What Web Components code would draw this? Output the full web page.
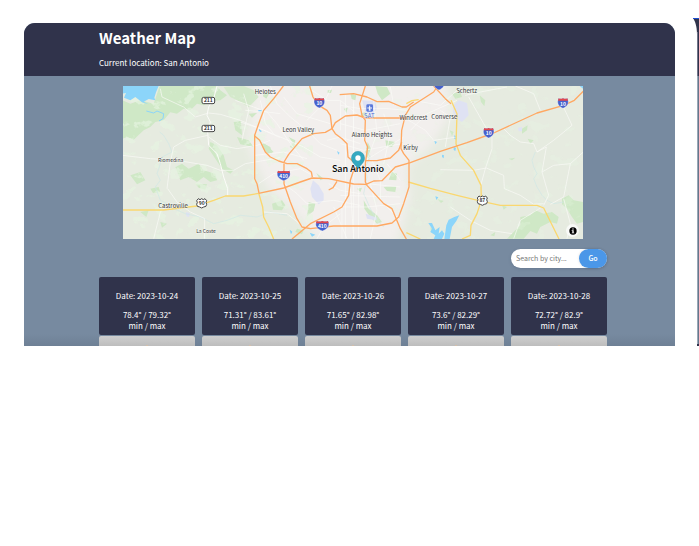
<!DOCTYPE html>
<html lang="en">
<head>
<meta charset="utf-8">
<meta name="viewport" content="width=device-width, initial-scale=1">
<title>Weather Map</title>
<style>
  html { background: #fff; }
  body { margin: 0; font-family: "Noto Sans CJK SC", "Open Sans", sans-serif; font-size: 8px; line-height: 11px; color: #fff; }
</style>
</head>
<body>
<weather-stage>
  <weather-app>
    <weather-header slot="header">
      <span slot="title">Weather Map</span>
      <span slot="place">Current location: San Antonio</span>
    </weather-header>
    <city-map></city-map>
    <city-search></city-search>
    <forecast-row>
      <day-card date="2023-10-24">78.4° / 79.32°</day-card>
      <day-card date="2023-10-25">71.31° / 83.61°</day-card>
      <day-card date="2023-10-26">71.65° / 82.98°</day-card>
      <day-card date="2023-10-27">73.6° / 82.29°</day-card>
      <day-card date="2023-10-28">72.72° / 82.9°</day-card>
    </forecast-row>
  </weather-app>
  <next-slide slot="next"></next-slide>
</weather-stage>

<template id="weather-stage">
  <style>
    :host { display: grid; grid-template-columns: minmax(0, 1fr) 6px; column-gap: 18px; padding: 18px 0 0 24px; }
    .main { padding-top: 5px; }
  </style>
  <div class="main"><slot></slot></div>
  <slot name="next"></slot>
</template>

<template id="next-slide">
  <style>
    :host { display: block; }
    svg { display: block; width: 6px; height: 100%; }
  </style>
  <svg viewBox="0 0 6 328" preserveAspectRatio="none" aria-hidden="true">
    <path d="M0 0H6V58H4V16C4 8 2 3 0 0Z" fill="#30334b"/>
    <path d="M0 0H6V1H0Z" fill="#1d4ed0"/>
    <path d="M4 14H5V58H4Z" fill="#73758a"/>
    <path d="M4 58H6V328H4Z" fill="#66778c"/>
    <path d="M4 58H5V328H4Z" fill="#9aa8b7"/>
    <path d="M4 326H6V328H4Z" fill="#30334b"/>
  </svg>
</template>

<template id="weather-app">
  <style>
    :host { display: block; overflow: hidden; border-radius: 11px 11px 0 0; background: linear-gradient(to top, #6e8095, #778aa0 12px); }
    main { display: flex; flex-direction: column; padding: 10px 68px 0 75px; }
  </style>
  <slot name="header"></slot>
  <main><slot></slot></main>
</template>

<template id="weather-header">
  <style>
    :host { display: block; background: #30334b; padding: 3px 68px 7px 75px; }
    h1 { margin: 0 0 7px; font-size: 15px; line-height: 24px; font-weight: 700; }
    p { margin: 0; line-height: 12px; }
  </style>
  <header><h1><slot name="title"></slot></h1><p><slot name="place"></slot></p></header>
</template>

<template id="city-search">
  <style>
    :host { display: flex; justify-content: flex-end; margin: 10px 0 9px; }
    form { display: flex; width: 96px; height: 19px; border-radius: 10px; background: #fff; box-shadow: 0 1px 3px #4d607766; }
    input { flex: 1; min-width: 0; border: 0; outline: 0; background: none; padding: 0 0 0 5px; font: 7px/19px "Noto Sans CJK SC", sans-serif; color: #333; }
    input::placeholder { color: #777; opacity: 1; }
    button { width: 28px; border: 0; padding: 0; border-radius: 10px; background: #4b97e8; color: #fff; font: 500 7px/19px "Noto Sans CJK SC", sans-serif; box-shadow: 0 0 3px #0002; }
  </style>
  <form role="search">
    <input type="text" aria-label="Search by city" placeholder="Search by city...">
    <button type="button">Go</button>
  </form>
</template>

<template id="forecast-row">
  <style>:host { display: grid; grid-template-columns: repeat(5, minmax(0, 1fr)); column-gap: 7px; }</style>
  <slot></slot>
</template>

<template id="day-card">
  <style>
    :host { display: block; text-align: center; }
    header { background: #30334b; border-radius: 2px; padding: 13px 0 4px; }
    p { margin: 0; }
    .date { margin-bottom: 8px; }
    .sky { display: flex; justify-content: center; align-items: flex-end; margin-top: 1px; height: 10px; border-radius: 2px 2px 0 0; background: linear-gradient(#cecece, #bdbdbd); }
    .sky svg { display: block; width: 6px; height: 1px; }
  </style>
  <header>
    <p class="date">Date: <span></span></p>
    <p><slot></slot></p>
    <p>min / max</p>
  </header>
  <div class="sky"><svg viewBox="0 0 6 1" aria-hidden="true"><path d="M2 1L3 0L4 1Z" fill="#e9bd93"/></svg></div>
</template>

<template id="city-map">
  <style>
    :host { display: block; position: relative; margin: 0 24px; height: 153px; overflow: hidden; background: #e6ebe0; }
    .map { display: block; width: 100%; height: 100%; }
    text { font-family: "Noto Sans CJK SC", sans-serif; font-size: 18px; fill: #333; stroke: #fff; stroke-width: 3px; paint-order: stroke; stroke-opacity: .5; text-anchor: middle; }
    .small { font-size: 15px; }
    .big { font-size: 27px; font-weight: 500; fill: #000; }
    .num { font-size: 15px; font-weight: 700; stroke: none; }
    .white { fill: #fff; }
    .sat { fill: #4a6ad4; }
    button { position: absolute; right: 4px; bottom: 2px; width: 13px; height: 13px; padding: 0; border: 0; border-radius: 50%; background: #ffffffb0; display: grid; place-items: center; }
    button svg { display: block; width: 8px; height: 8px; }
  </style>
  <svg class="map" viewBox="367 257 1382 459" preserveAspectRatio="xMidYMid slice" role="img" aria-label="Map of San Antonio and surroundings">
    <defs>
      <filter id="soft" x="-20%" y="-20%" width="140%" height="140%"><feGaussianBlur stdDeviation="14"/></filter>
      <filter id="wild" x="0" y="0" width="100%" height="100%">
        <feTurbulence type="fractalNoise" baseFrequency=".022 .028" numOctaves="4" seed="8"/>
        <feColorMatrix values="0 0 0 0 .80  0 0 0 0 .91  0 0 0 0 .76  12 0 0 0 -7.1"/>
      </filter>
      <g id="interstate">
        <path d="M-13-14Q-7-11 0-14Q7-11 13-14C20 0 14 10 0 16C-14 10-20 0-13-14Z" fill="#4561cd" stroke="#fff" stroke-width="1"/>
        <path d="M-13-14Q-7-11 0-14Q7-11 13-14L15-7H-15Z" fill="#e2484d"/>
      </g>
      <g id="interstate-wide">
        <path d="M-17-14Q-9-11 0-14Q9-11 17-14C24 0 16 10 0 16C-16 10-24 0-17-14Z" fill="#4561cd" stroke="#fff" stroke-width="1"/>
        <path d="M-17-14Q-9-11 0-14Q9-11 17-14L19-7H-19Z" fill="#e2484d"/>
      </g>
      <path id="us" d="M-10-14L-5-11L0-14L5-11L10-14L15-8Q11-3 15 3Q15 11 6 11L0 14L-6 11Q-15 11-15 3Q-11-3-15-8Z" fill="#fff" stroke="#444" stroke-width="3"/>
    </defs>
    <rect x="367" y="257" width="1382" height="459" fill="#e6ebe0"/>
    <path d="M770 230H1330L1360 330L1290 440L1220 500L1230 590L1190 730H960L890 640L800 560L740 430Z" fill="#f2efed" filter="url(#soft)"/>

    <g fill="#cfe8c6">
      <g transform="translate(360 240)">
        <path d="M7 60L30 70L60 60L100 70L118 17H290L300 30L320 45L300 60L270 62L250 75L230 70L210 90L190 85L170 100L150 96L130 120L105 125L90 140L70 150L40 178L20 170L7 175Z"/>
        <path d="M310 20L370 17L400 30L415 50L385 80L350 60L330 50Z" opacity=".8"/>
        <path d="M165 260L185 250L205 265L235 250L250 270L285 280L290 300L270 305L250 290L230 305L205 290L180 300Z"/>
        <path d="M270 185L290 195L310 225L320 260L340 270L330 280L305 265L285 235L265 205Z"/>
        <path d="M340 125L362 122L365 165L345 150ZM350 170L385 180L400 200L360 192ZM30 285L60 275L75 300L50 312ZM60 395L85 390L78 410ZM225 310L260 312L255 328L235 322ZM90 325L115 320L120 335L98 338ZM120 425L140 430L125 442ZM430 190L450 200L455 220L440 212ZM385 100L410 98L395 112Z"/>
      </g>
      <g transform="translate(720 240)">
        <path d="M62 185L80 195L100 215L85 222L68 205ZM145 170L165 180L162 205L148 200L158 188ZM95 370L125 360L135 375L125 390L98 388ZM205 365L225 370L220 392L200 408L203 385ZM70 35L88 38L78 55L68 48ZM262 30L275 28L272 38L262 38ZM228 278L250 295L240 300ZM170 445L190 450L185 462L165 455ZM310 85L322 82L318 98ZM330 40L348 44L345 60L334 56Z"/>
      </g>
      <g transform="translate(1020 240)">
        <path d="M105 17L140 20L150 40L125 60L112 40ZM60 100L75 95L85 110L68 112ZM135 180L165 185L155 200L138 198ZM155 275L170 280L168 300L145 298ZM130 320L168 318L165 335L140 332ZM70 360L85 385L110 405L125 425L110 430L90 410L72 385ZM82 185L92 205L85 240L75 215ZM50 325L65 322L60 335ZM290 355L310 362L302 368ZM270 440L280 448L272 456ZM328 150L340 155L335 168Z"/>
      </g>
      <g transform="translate(1320 240)">
        <path d="M240 410L270 405L285 390L310 400L335 395L355 410L350 430L330 425L300 440L290 460L270 452L250 475H200L220 455L240 435ZM365 355L385 345L400 360L429 365V425L410 430L395 410L380 385L365 372ZM245 145L262 135L260 150L245 160ZM205 235L225 232L215 240ZM118 45L135 60L132 78L122 65ZM185 375L200 380L190 388ZM150 465L165 455L162 468ZM35 40L60 35L65 50L45 55ZM262 175L280 180L270 190Z"/>
      </g>
    </g>
    <rect x="367" y="257" width="570" height="459" filter="url(#wild)" opacity=".65"/>
    <rect x="1120" y="257" width="629" height="459" filter="url(#wild)" opacity=".25"/>

    <g fill="#dfe2f3">
      <path d="M938 540L955 555L970 580L970 600L955 612L935 590L930 565Z"/>
      <path d="M1360 315L1375 300L1400 308L1405 345L1385 365L1368 355L1358 335Z"/>
      <path d="M1085 300L1125 302L1130 325L1115 345L1095 335Z"/>
      <path d="M1553 382L1565 380L1565 392L1555 393ZM1096 640L1130 652L1128 660L1100 655ZM557 635L569 638L566 650L558 648Z"/>
    </g>

    <g fill="#8cd5fa">
      <path d="M367 257H475L467 276L462 292L465 300L445 296L430 304L445 312L425 306L405 290L390 300L371 292L377 278L367 280Z"/>
      <path d="M1284 668L1295 668L1305 690L1318 680L1315 700L1325 690L1332 700L1325 716H1300L1305 705L1290 695L1295 685Z"/>
      <path d="M1332 716L1338 675L1345 658L1362 650L1377 645L1368 662L1355 680L1348 716Z"/>
      <path d="M773 330L785 328L784 334L775 334ZM776 385L784 392L782 396L776 391ZM928 697L945 703L935 709ZM1305 588L1314 591L1308 599ZM1302 421L1310 425L1305 432ZM1325 463L1331 465L1330 474L1325 470ZM1362 405L1368 408L1366 418L1361 414ZM1360 440L1367 442L1365 452L1360 449ZM1738 257H1749V266ZM868 688L876 694L872 702ZM1010 452L1018 457L1014 463Z"/>
      <path d="M438 332L460 338L470 332L490 340L488 355L476 362" fill="none" stroke="#8cd5fa" stroke-width="3"/>
    </g>
    <g fill="none" stroke="#cfe7e5" stroke-width="2">
      <path d="M478 395L490 405L505 430L515 455L485 470L480 490L470 520L480 540L465 560L480 600L500 610L520 625L555 640L600 650L640 670L680 660L720 645L770 650L810 635L860 645"/>
      <path d="M1605 455L1595 480L1600 500L1610 520L1600 535L1610 560L1625 585L1640 600L1660 610L1690 605"/>
      <path d="M1098 440L1110 470L1095 500L1100 530L1090 580L1110 625L1130 660L1150 680"/>
    </g>

    <g fill="none" stroke="#fbfbf8" stroke-width="2">
      <g transform="translate(360 240)">
        <path d="M290 17L280 55L265 80L260 105L270 125L262 155L265 195L290 220L300 250L310 290L322 325V345" stroke-width="3"/>
        <path d="M120 25L125 50L190 80L225 110L265 98L300 102L360 120L430 150L480 172M7 225L90 235L170 240L260 255L300 270H340L375 250L480 232M140 325L150 245L160 200L195 180L262 165M265 170L300 195L350 205L410 195L450 180M142 325L170 365L210 395L253 415V475M100 475L120 395L140 375"/>
        <path d="M345 60L400 80L440 95L480 100M370 40L385 90L365 180M420 60L435 130L460 160"/>
      </g>
      <g transform="translate(720 240)">
        <path d="M0 125L60 145L120 170L190 200L240 230L300 240M15 90L80 95L110 130L150 190L190 240M90 17L110 70L150 110L200 150L240 190L290 210M130 50L170 100L270 130M45 225L130 215L200 235M55 310L100 280L180 265L225 290M130 310L170 340L200 370L280 360L360 375M70 395L140 400L190 440M230 475L250 440L300 400M215 30L260 60L300 60L360 110M275 17L250 70L200 120M260 180L300 170L360 190M265 310L300 330L360 340M280 380L320 475M300 60V150M340 70V475M320 220L360 230M305 370V475"/>
      </g>
      <g transform="translate(1020 240)">
        <path d="M15 40V475M40 60V240M0 75L60 85L140 85L200 90M0 130L75 150L180 130M100 60L110 160L80 240M130 100L150 160L130 250M0 190L70 210L185 190M0 380L80 380L180 370M0 345L180 350M55 320V475M95 240L120 300V360M140 250L180 300M75 240L190 170M210 150L260 100L350 60M205 120L255 150L280 180L350 170M220 60L300 75L350 30M110 350L180 420M30 320L40 475M80 310L180 320M160 75L150 20M90 310L110 390L90 475"/>
      </g>
      <g transform="translate(1320 240)">
        <path d="M75 45L120 35L200 20M85 50L130 130L155 170V205L135 265L120 320M0 268L100 270L138 263L190 285L192 325L240 345L280 372L310 370M190 145L210 165L240 185L280 190L290 215L340 180L395 135L360 60M290 215L318 200L305 275L325 345L310 375M305 275L340 255L390 250L429 215M390 250L370 350L330 372M370 355L390 430L380 475M305 380L240 420L220 475M30 380L90 420L150 450L215 460M225 17L280 40L300 90M0 90L30 110L15 200"/>
      </g>
    </g>

    <g fill="none" stroke="#fad76f" stroke-width="4" stroke-linejoin="round">
      <path d="M367 629L490 629L590 617L640 600L675 587L730 587L775 579"/>
      <path d="M775 578L787 620L790 650L805 680L820 716"/>
      <path d="M1224 545L1290 564L1370 585L1445 603L1500 615H1610L1630 623L1676 716"/>
      <path d="M1352 300L1370 340L1367 430L1380 465L1420 510L1442 555L1443 600L1430 640L1412 675L1410 705L1385 716"/>
      <path d="M1218 697L1260 716M1218 310L1235 301L1255 298"/>
    </g>
    <g fill="none" stroke="#ffa862" stroke-width="4" stroke-linejoin="round">
      <path d="M849 257L820 295L790 330L775 370L763 405V535L770 550L776 578"/>
      <path d="M763 407L778 420L795 455L810 470L835 482L860 490L890 490L920 505L933 515L936 530"/>
      <path d="M775 579L850 563L900 545L935 533L985 535L1060 551L1097 552L1120 542L1145 541L1185 500L1230 487L1320 453L1400 427L1480 398L1610 338L1690 315L1722 300L1749 273"/>
      <path d="M851 490V550L870 605L890 655L905 680L930 685L1000 677H1130L1175 668L1195 650L1210 610L1226 560V480L1210 460L1202 445L1204 390L1215 345L1230 320L1300 275L1312 257"/>
      <path d="M851 485L865 462L905 415L940 400L975 396L995 385L1005 367L1035 347L1070 344L1095 353H1220"/>
      <path d="M928 257L938 290L955 315L980 330L990 345L995 385L1005 400L1025 415L1040 430L1043 470L1060 485"/>
      <path d="M1095 257L1078 310L1085 345L1095 360L1093 420L1102 440L1095 490V545L1100 555L1150 610L1175 625L1200 685L1218 716"/>
      <path d="M1018 283L1060 280L1100 290L1130 304L1165 303L1205 320H1218L1240 305"/>
      <path d="M1095 481H1130L1170 473L1195 450L1204 425"/>
      <path d="M875 716L930 670L1000 635L1025 620L1045 585L1050 540L1060 510L1080 490"/>
      <path d="M985 569L998 562L1010 543M1300 257L1335 295L1352 310"/>
    </g>

    <text x="795" y="281">Helotes</text>
    <text x="894" y="394">Leon Valley</text>
    <text class="small" x="511" y="486">Riomedina</text>
    <text x="518" y="624">Castroville</text>
    <text class="small" x="617" y="699">La Coste</text>
    <text x="1115" y="411">Alamo Heights</text>
    <text x="1239" y="360">Windcrest</text>
    <text x="1332" y="356">Converse</text>
    <text x="1231" y="450">Kirby</text>
    <text x="1399" y="279">Schertz</text>
    <g transform="translate(1108 323)"><rect x="-10" y="-11" width="20" height="22" rx="4" fill="#5979da"/><path d="M-7 0H7M0-7V7M-3 6H3" stroke="#fff" stroke-width="3"/></g>
    <text class="sat" x="1107" y="352">SAT</text>

    <g fill="#fff" stroke="#444" stroke-width="3"><rect x="605" y="291" width="38" height="19" rx="5"/><rect x="605" y="375" width="38" height="19" rx="5"/></g>
    <text class="num" x="624" y="306">211</text>
    <text class="num" x="624" y="390">211</text>
    <use href="#us" x="604" y="609"/><text class="num" x="604" y="614">90</text>
    <use href="#us" x="1446" y="601"/><text class="num" x="1446" y="606">87</text>
    <use href="#interstate" x="957" y="307"/><text class="num white" x="957" y="315">10</text>
    <use href="#interstate" x="1465" y="397"/><text class="num white" x="1465" y="405">10</text>
    <use href="#interstate" x="1688" y="308"/><text class="num white" x="1688" y="316">10</text>
    <use href="#interstate" x="1316" y="253"/>
    <use href="#interstate-wide" x="850" y="525"/><text class="num white" x="850" y="533">410</text>
    <use href="#interstate-wide" x="966" y="676"/><text class="num white" x="966" y="684">410</text>

    <text class="big" x="1073" y="514">San Antonio</text>
    <path d="M1073 505C1068 496 1053 487 1053 473A20 20 0 0 1 1093 473C1093 487 1078 496 1073 505Z" fill="#36a9c1" stroke="#278ca4" stroke-width="1"/>
    <circle cx="1073" cy="473" r="8" fill="#fff"/>
  </svg>
  <button type="button" aria-label="Map attribution">
    <svg viewBox="0 0 24 24" aria-hidden="true"><circle cx="12" cy="12" r="11"/><path d="M8 10H14V17H16V19H8V17H10V12H8Z" fill="#fff"/><circle cx="12" cy="6" r="2" fill="#fff"/></svg>
  </button>
</template>

<script>
  class TemplateElement extends HTMLElement {
    constructor() {
      super();
      const template = document.getElementById(this.localName);
      this.attachShadow({ mode: "open" }).append(template.content.cloneNode(true));
    }
  }

  for (const name of ["weather-stage", "next-slide", "weather-app", "weather-header", "city-map", "city-search", "forecast-row"]) {
    customElements.define(name, class extends TemplateElement {});
  }

  customElements.define("day-card", class extends TemplateElement {
    connectedCallback() {
      this.shadowRoot.querySelector(".date span").textContent = this.getAttribute("date");
    }
  });
</script>
</body>
</html>
